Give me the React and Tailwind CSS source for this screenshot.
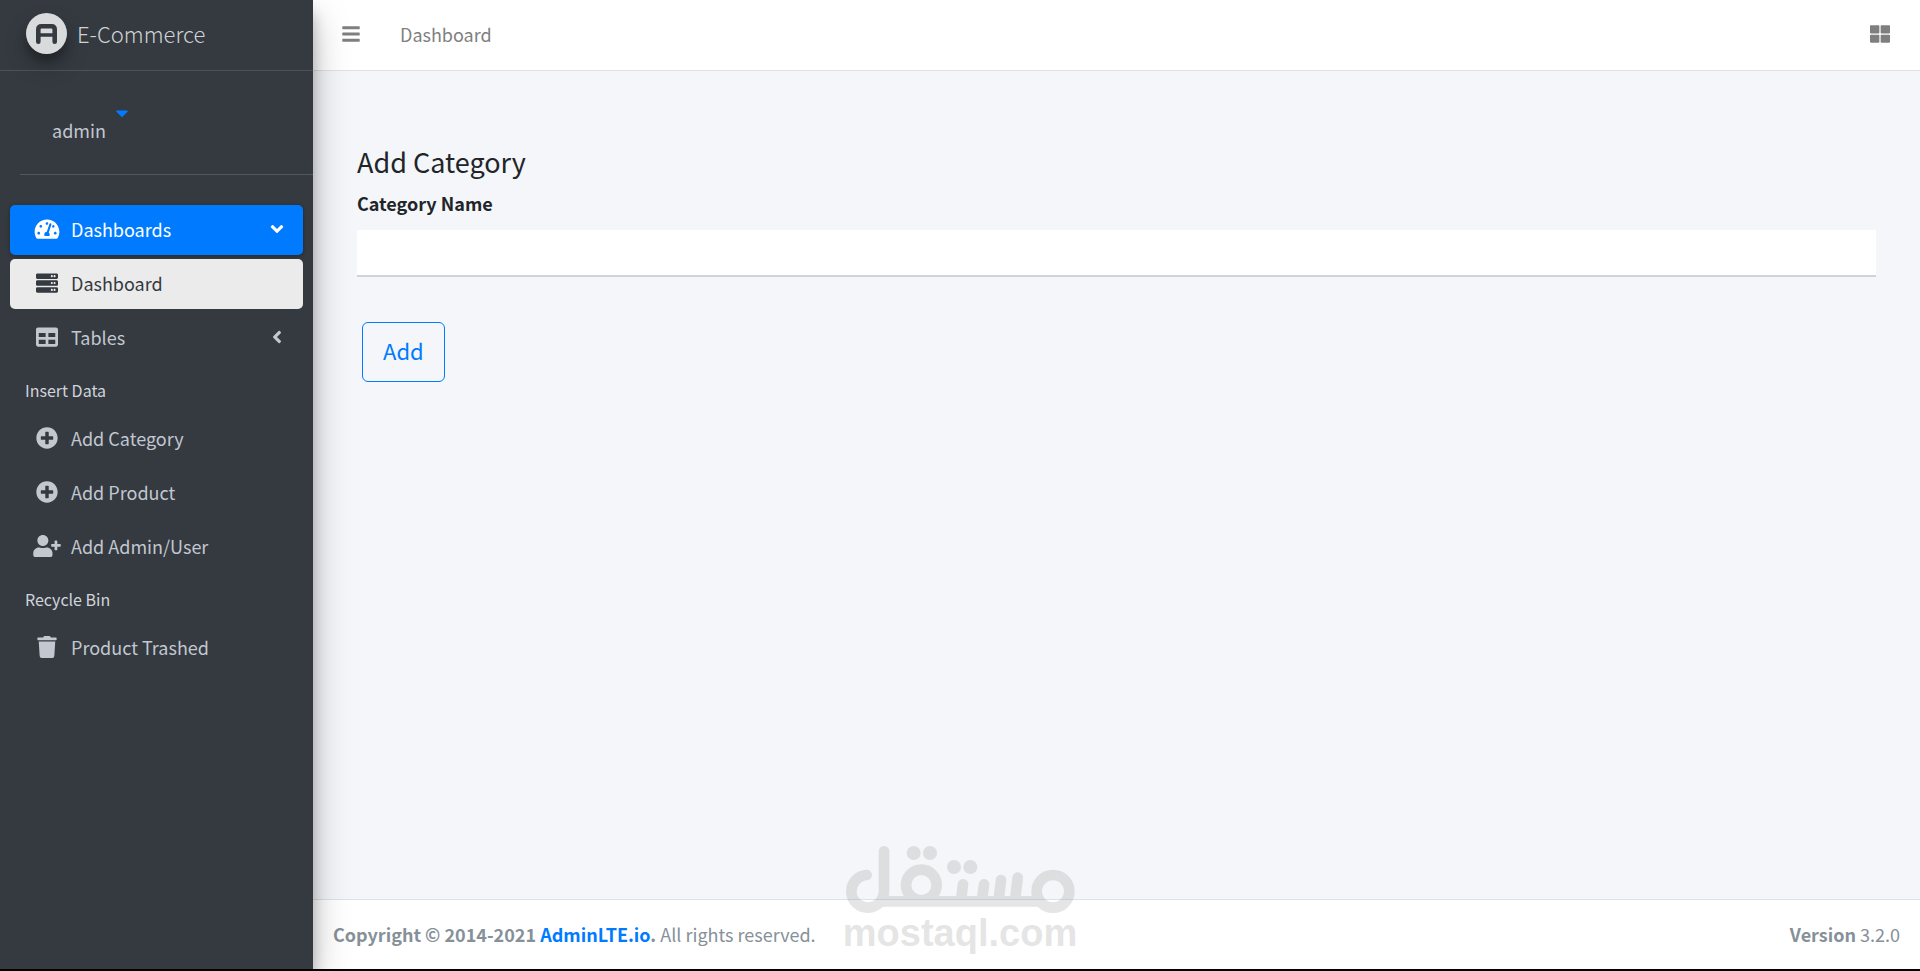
import React, { useState } from "react";
import {
  FaAngleDown,
  FaAngleLeft,
  FaBars,
  FaCaretDown,
  FaPlusCircle,
  FaServer,
  FaTable,
  FaTachometerAlt,
  FaThLarge,
  FaTrash,
  FaUserPlus,
} from "react-icons/fa";

const BrandLogo = () => (
  <svg
    viewBox="0 0 41 41"
    className="h-[41px] w-[41px] shrink-0 rounded-full bg-[#d9dadc] shadow-[0_12px_24px_rgba(0,0,0,0.19),0_8px_8px_rgba(0,0,0,0.23)]"
    aria-hidden="true"
  >
    <g fill="none" stroke="#343a40" strokeWidth="4.6" strokeLinecap="round" strokeLinejoin="round">
      <path d="M12.300 28.700V16.500Q12.300 13.300 15.500 13.300H25.500Q28.700 13.300 28.700 16.500V28.700" />
      <path d="M12.300 22H28.700" strokeWidth="3.600" />
    </g>
  </svg>
);

const Watermark = () => (
  <div className="pointer-events-none absolute bottom-4 left-1/2 z-20 flex w-[230px] -translate-x-1/2 flex-col items-center text-[#808080] opacity-20">
    <svg viewBox="75 48 690 202" className="w-full" role="img" aria-label="مستقل">
      <g fill="none" stroke="currentColor" strokeWidth="32" strokeLinecap="round">
        <path d="M140 135A49 49 0 1 0 192 184V64" />
        <path d="M180 214H660" strokeLinecap="butt" />
        <circle cx="304" cy="165" r="46" />
        <circle cx="699" cy="184" r="49" />
        <path d="M429 163L423 212M492 163L486 212M543 150L536 212M593 143L585 212" />
      </g>
      <g fill="currentColor">
        <circle cx="281" cy="69" r="21" />
        <circle cx="330" cy="69" r="21" />
        <circle cx="402" cy="111" r="21" />
        <circle cx="451" cy="111" r="21" />
      </g>
    </svg>
    <span className="font-['Liberation_Sans',sans-serif] text-[38px] leading-10 font-bold">mostaql.com</span>
  </div>
);

const NavItem = ({ icon: Icon, arrow: Arrow, label, className = "text-[#c2c7d0]" }) => (
  <li>
    <a href="#" className={`flex h-[50px] items-center gap-2 rounded-[5px] pr-4 pb-0.5 pl-[21px] ${className}`}>
      <Icon className="h-[22px] w-8 shrink-0" />
      <span className="grow">{label}</span>
      {Arrow && <Arrow className="h-5 w-5" />}
    </a>
  </li>
);

const NavHeader = ({ children }) => (
  <li className="flex h-[43px] items-center pt-0.5 pl-[15px] text-base text-[#d0d4db]">{children}</li>
);

const Sidebar = () => (
  <aside className="relative z-10 w-[313px] shrink-0 bg-[#343a40] shadow-[0_18px_35px_rgba(0,0,0,0.25),0_13px_13px_rgba(0,0,0,0.22)]">
    <a
      href="#"
      className="flex h-[71px] items-center gap-2.5 border-b border-[#4b545c] pr-4 pb-1 pl-[26px] text-[22px] font-light text-[#d0d3d6]"
    >
      <BrandLogo />
      E-Commerce
    </a>

    <div className="ml-5 flex h-[104px] border-b border-[#4f5962] pt-8 pl-8 text-[#c2c7d0]">
      <button type="button" className="flex items-start gap-2">
        <span className="pt-3">admin</span>
        <FaCaretDown className="h-5 w-4 text-[#007bff]" />
      </button>
    </div>

    <nav className="px-2.5 pt-[30px]">
      <ul className="flex flex-col gap-1">
        <NavItem
          icon={FaTachometerAlt}
          arrow={FaAngleDown}
          label="Dashboards"
          className="bg-[#007bff] text-white shadow-[0_1px_4px_rgba(0,0,0,0.3)]"
        />
        <NavItem icon={FaServer} label="Dashboard" className="bg-[#ebebec] text-[#343a40]" />
        <NavItem icon={FaTable} arrow={FaAngleLeft} label="Tables" />
        <NavHeader>Insert Data</NavHeader>
        <NavItem icon={FaPlusCircle} label="Add Category" />
        <NavItem icon={FaPlusCircle} label="Add Product" />
        <NavItem icon={FaUserPlus} label="Add Admin/User" />
        <NavHeader>Recycle Bin</NavHeader>
        <NavItem icon={FaTrash} label="Product Trashed" />
      </ul>
    </nav>
  </aside>
);

const App = () => {
  const [category, setCategory] = useState("");

  return (
    <div className="relative flex min-h-screen overflow-hidden border-b-2 border-black bg-[#f4f6f9] font-['Noto_Sans_CJK_SC',sans-serif] text-lg leading-[30px] text-[#212529]">
      <Sidebar />

      <div className="flex min-w-0 grow flex-col">
        <header className="flex h-[71px] items-center border-b border-[#dee2e6] bg-white pr-[30px] pb-0.5 pl-[29px] text-[#7f7f7f]">
          <button type="button" aria-label="Toggle menu" className="mr-10">
            <FaBars className="h-5 w-[18px]" />
          </button>
          <a href="#">Dashboard</a>
          <button type="button" aria-label="Apps" className="ml-auto">
            <FaThLarge className="h-5 w-5" />
          </button>
        </header>

        <main className="grow px-11 pt-[73px]">
          <form onSubmit={(e) => e.preventDefault()}>
            <h1 className="mb-2 text-[27px] leading-9">Add Category</h1>
            <label htmlFor="category" className="block font-bold">
              Category Name
            </label>
            <input
              id="category"
              type="text"
              value={category}
              onChange={(e) => setCategory(e.target.value)}
              className="mt-3 block h-[47px] w-full border-b-2 border-[#ced4da] bg-white px-4 outline-none"
            />
            <button
              type="submit"
              className="mt-[45px] ml-[5px] h-[60px] rounded-md border border-[#007bff] px-5 pb-1 text-[22px] text-[#007bff]"
            >
              Add
            </button>
          </form>
        </main>

        <footer className="flex h-[70px] items-center justify-between border-t border-[#dee2e6] bg-white px-5 pb-0.5 text-[#869099]">
          <p>
            <strong>
              Copyright © 2014-2021{" "}
              <a href="#" className="text-[#007bff]">
                AdminLTE.io
              </a>
              .
            </strong>{" "}
            All rights reserved.
          </p>
          <p>
            <b>Version</b> 3.2.0
          </p>
        </footer>
      </div>

      <Watermark />
    </div>
  );
};

export default App;
